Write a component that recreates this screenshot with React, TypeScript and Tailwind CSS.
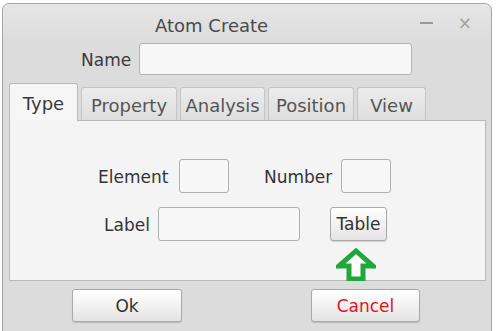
import React from "react";

const font = { fontFamily: '"DejaVu Sans", "Open Sans", sans-serif' };

function Tab({ label, active, w }: { label: string; active?: boolean; w: string }) {
  if (active) {
    return (
      <div className={`${w} h-[38px] -mb-px z-10 flex items-center justify-center bg-[#f6f6f6] border border-[#b9b9b9] border-b-0 rounded-t-[3px] text-[18px] text-[#3a3a3a]`}>
        <span className="translate-y-[1px]">{label}</span>
      </div>
    );
  }
  return (
    <div className={`${w} h-[33px] flex items-center justify-center bg-gradient-to-b from-[#ececec] to-[#dedede] border border-[#c4c4c4] border-b-0 rounded-t-[3px] text-[18px] text-[#555]`}>
      <span className="translate-y-[1px]">{label}</span>
    </div>
  );
}

function Btn({ children, className }: { children: React.ReactNode; className?: string }) {
  return (
    <div className={`flex items-center justify-center bg-gradient-to-b from-white to-[#e4e4e4] border border-[#a9a9a9] rounded-[3px] shadow-[0_1px_1px_rgba(0,0,0,0.15)] ${className ?? ""}`}>
      <span className="translate-y-[1px]">{children}</span>
    </div>
  );
}

export default function App() {
  return (
    <div className="w-[497px] h-[331px] bg-white overflow-hidden" style={font}>
      <div className="mt-[3px] ml-[2px] w-[490px] h-[330px] bg-[#dcdcdc] border border-[#a8a8a8] rounded-t-[7px] flex flex-col">
        {/* title bar */}
        <div className="h-[38px] flex items-center bg-gradient-to-b from-[#e6e6e6] to-[#dcdcdc] rounded-t-[7px]">
          <div className="ml-[152px] text-[18px] text-[#4a4a4a] translate-y-[2px]">Atom Create</div>
          <div className="ml-auto w-[13px] h-[2px] bg-[#9a9a9a] mr-[25px]" />
          <div className="mr-[19px] text-[17px] leading-none text-[#a0a0a0]">×</div>
        </div>

        {/* name row */}
        <div className="flex items-center h-[32px] mt-[1px]">
          <div className="ml-[78px] w-[58px] text-[17px] text-[#3a3a3a] translate-y-[2px]">Name</div>
          <div className="w-[273px] h-[32px] bg-[#f7f7f7] border border-[#b3b3b3] rounded-[3px]" />
        </div>

        {/* tabs */}
        <div className="flex items-end gap-[3px] ml-[6px] mt-[8px]">
          <Tab label="Type" active w="w-[69px]" />
          <Tab label="Property" w="w-[96px]" />
          <Tab label="Analysis" w="w-[85px]" />
          <Tab label="Position" w="w-[86px]" />
          <Tab label="View" w="w-[69px]" />
        </div>

        {/* panel */}
        <div className="ml-[6px] w-[477px] h-[161px] bg-[#f4f4f4] border border-[#b9b9b9] flex flex-col text-[17px] text-[#333]">
          <div className="flex items-center mt-[38px] h-[34px]">
            <div className="ml-[88px] w-[81px] translate-y-[2px]">Element</div>
            <div className="w-[50px] h-[34px] bg-[#f7f7f7] border border-[#b0b0b0] rounded-[3px]" />
            <div className="ml-[35px] w-[77px] translate-y-[2px]">Number</div>
            <div className="w-[50px] h-[34px] bg-[#f7f7f7] border border-[#b0b0b0] rounded-[3px]" />
          </div>
          <div className="flex items-center mt-[14px] h-[34px]">
            <div className="ml-[94px] w-[54px] translate-y-[2px]">Label</div>
            <div className="w-[142px] h-[34px] bg-[#f7f7f7] border border-[#b0b0b0] rounded-[3px]" />
            <div className="relative ml-[30px]">
              <Btn className="w-[57px] h-[34px] text-[17px] text-[#333]">Table</Btn>
              <svg className="absolute left-[6px] top-[41px]" width="40" height="33" viewBox="0 0 40 33">
                <polygon points="20,3 37,18 27,18 27,31 13,31 13,18 3,18" fill="#ffffff" stroke="#1fa83a" strokeWidth="5" strokeLinejoin="miter" />
              </svg>
            </div>
          </div>
        </div>

        {/* buttons */}
        <div className="flex items-center mt-[8px]">
          <Btn className="ml-[69px] w-[110px] h-[33px] text-[17px] text-[#333]">Ok</Btn>
          <Btn className="ml-[129px] w-[109px] h-[33px] text-[17px] text-[#e0141e]">Cancel</Btn>
        </div>
      </div>
    </div>
  );
}
